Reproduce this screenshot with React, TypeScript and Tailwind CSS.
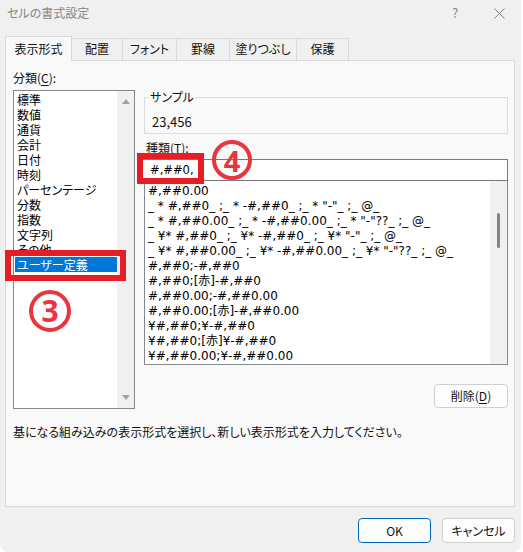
import React from "react";

const cats = ["標準", "数値", "通貨", "会計", "日付", "時刻", "パーセンテージ", "分数", "指数", "文字列", "その他"];

const formats = [
  "#,##0.00",
  '_ * #,##0_ ;_ * -#,##0_ ;_ * "-"_ ;_ @_ ',
  '_ * #,##0.00_ ;_ * -#,##0.00_ ;_ * "-"??_ ;_ @_ ',
  '_ ¥* #,##0_ ;_ ¥* -#,##0_ ;_ ¥* "-"_ ;_ @_ ',
  '_ ¥* #,##0.00_ ;_ ¥* -#,##0.00_ ;_ ¥* "-"??_ ;_ @_ ',
  "#,##0;-#,##0",
  "#,##0;[赤]-#,##0",
  "#,##0.00;-#,##0.00",
  "#,##0.00;[赤]-#,##0.00",
  "¥#,##0;¥-#,##0",
  "¥#,##0;[赤]¥-#,##0",
  "¥#,##0.00;¥-#,##0.00",
];

const tabs = [
  { label: "配置", w: "w-[51px]" },
  { label: "フォント", w: "w-[54px]" },
  { label: "罫線", w: "w-[53px]" },
  { label: "塗りつぶし", w: "w-[67px]" },
  { label: "保護", w: "w-[52px]" },
];

export default function App() {
  return (
    <div className="relative w-[523px] h-[552px] bg-white font-['Noto_Sans_CJK_JP',sans-serif] text-[12px] leading-[16px] text-[#111] [font-feature-settings:'palt']">
      <div className="w-[521px] h-[552px] bg-[#f0f0f0] rounded-b-[8px] flex flex-col">
        {/* title bar */}
        <div className="h-[36px] flex items-start pt-[5px] pl-[7px]">
          <span className="text-[#858585]">セルの書式設定</span>
          <div className="ml-auto flex">
            <div className="w-[44px] text-center text-[#858585] text-[13px] leading-[16px]">?</div>
            <div className="w-[44px] h-[16px] flex items-center justify-center">
              <svg width="11" height="11" viewBox="0 0 11 11">
                <path d="M0.5 0.5 L10.5 10.5 M10.5 0.5 L0.5 10.5" stroke="#858585" strokeWidth="1" fill="none" />
              </svg>
            </div>
          </div>
        </div>

        {/* tabs */}
        <div className="h-[24px] flex items-end pl-[5px]">
          <div className="relative z-10 -mb-px w-[67px] h-[25px] border-l border-t border-r border-[#d9d9d9] bg-[#f9f9f9] pt-[4px] text-center">
            表示形式
          </div>
          {tabs.map((t) => (
            <div
              key={t.label}
              className={`${t.w} h-[22px] border-t border-r border-[#d9d9d9] bg-[#f0f0f0] pt-[2px] text-center`}
            >
              {t.label}
            </div>
          ))}
        </div>

        {/* panel */}
        <div className="ml-[5px] w-[510px] h-[447px] border border-[#d9d9d9] bg-[#f9f9f9] flex flex-col pl-[7px] pr-[6px]">
          <div className="flex">
            {/* left column */}
            <div className="w-[122px] flex flex-col">
              <div className="mt-[9px]">
                分類(<span className="underline underline-offset-2">C</span>):
              </div>
              <div className="mt-[4px] h-[319px] border border-[#828790] bg-white flex">
                <div className="flex-1 pt-[1px] pl-[1px] leading-[15px] text-black">
                  {cats.map((c) => (
                    <div key={c} className="pl-[2px] h-[15px]">
                      {c}
                    </div>
                  ))}
                  <div className="pl-[2px] h-[15px] bg-[#0078d7] text-white">ユーザー定義</div>
                </div>
                <div className="w-[17px] bg-[#f0f0f0] flex flex-col items-center justify-between pt-[8px] pb-[8px]">
                  <svg width="8" height="5" viewBox="0 0 8 5">
                    <polygon points="4,0 8,5 0,5" fill="#a3a3a3" />
                  </svg>
                  <svg width="8" height="5" viewBox="0 0 8 5">
                    <polygon points="0,0 8,0 4,5" fill="#a3a3a3" />
                  </svg>
                </div>
              </div>
            </div>

            {/* right column */}
            <div className="ml-[7px] w-[366px] flex flex-col">
              <fieldset className="mt-[28px] ml-[2px] w-[364px] border border-[#dcdcdc] px-[4px] pb-[3px]">
                <legend className="px-[1px] leading-[16px]">サンプル</legend>
                <div className="pt-[9px] pl-[3px] text-[13px]">23,456</div>
              </fieldset>
              <div className="mt-[6px] ml-[4px]">
                種類(<span className="underline underline-offset-2">T</span>):
              </div>
              <div className="mt-[3px] h-[22px] border border-[#7a7a7a] bg-white flex items-center pl-[7px] text-black font-['DejaVu_Sans','Noto_Sans_CJK_JP',sans-serif] text-[11.5px]">
                #,##0,
              </div>
              <div className="ml-[2px] h-[184px] border-l border-r border-b border-[#828790] bg-white flex">
                <div className="flex-1 pt-[3px] pl-[3px] leading-[15px] text-black whitespace-pre overflow-hidden font-['DejaVu_Sans','Noto_Sans_CJK_JP',sans-serif] text-[12px]">
                  {formats.map((f, i) => (
                    <div key={i} className="h-[15px]">
                      {f}
                    </div>
                  ))}
                </div>
                <div className="w-[17px] bg-[#f0f0f0] flex flex-col items-center">
                  <div className="mt-[32px] w-[3px] h-[35px] rounded-full bg-[#858585]" />
                </div>
              </div>
              <div className="mt-[19px] self-end w-[74px] h-[24px] border border-[#d0d0d0] rounded-[4px] bg-[#fdfdfd] flex items-center justify-center">
                削除(<span className="underline underline-offset-2">D</span>)
              </div>
            </div>
          </div>
          <div className="mt-[15px]">基になる組み込みの表示形式を選択し、新しい表示形式を入力してください。</div>
        </div>

        {/* bottom buttons */}
        <div className="mt-[11px] flex justify-end gap-[11px] pr-[6px]">
          <div className="w-[73px] h-[25px] border border-[#0067c0] rounded-[4px] bg-[#fdfdfd] flex items-center justify-center">
            OK
          </div>
          <div className="w-[73px] h-[25px] border border-[#d0d0d0] rounded-[4px] bg-[#fdfdfd] flex items-center justify-center">
            キャンセル
          </div>
        </div>
      </div>

      {/* annotations */}
      <div className="absolute left-[5px] top-[250px] w-[121px] h-[31px] border-[6px] border-[#e81c24]" />
      <div className="absolute left-[137px] top-[153px] w-[67px] h-[31px] border-[6px] border-[#e81c24]" />
      <div className="absolute left-[29px] top-[290px] w-[42px] h-[42px] rounded-full border-[4px] border-[#e83540] flex items-center justify-center text-[#e83540] text-[30px] leading-none font-bold font-['Noto_Sans',sans-serif]">
        3
      </div>
      <div className="absolute left-[212px] top-[140px] w-[40px] h-[40px] rounded-full border-[4px] border-[#e83540] flex items-center justify-center text-[#e83540] text-[29px] leading-none font-bold font-['Noto_Sans',sans-serif]">
        4
      </div>
    </div>
  );
}
